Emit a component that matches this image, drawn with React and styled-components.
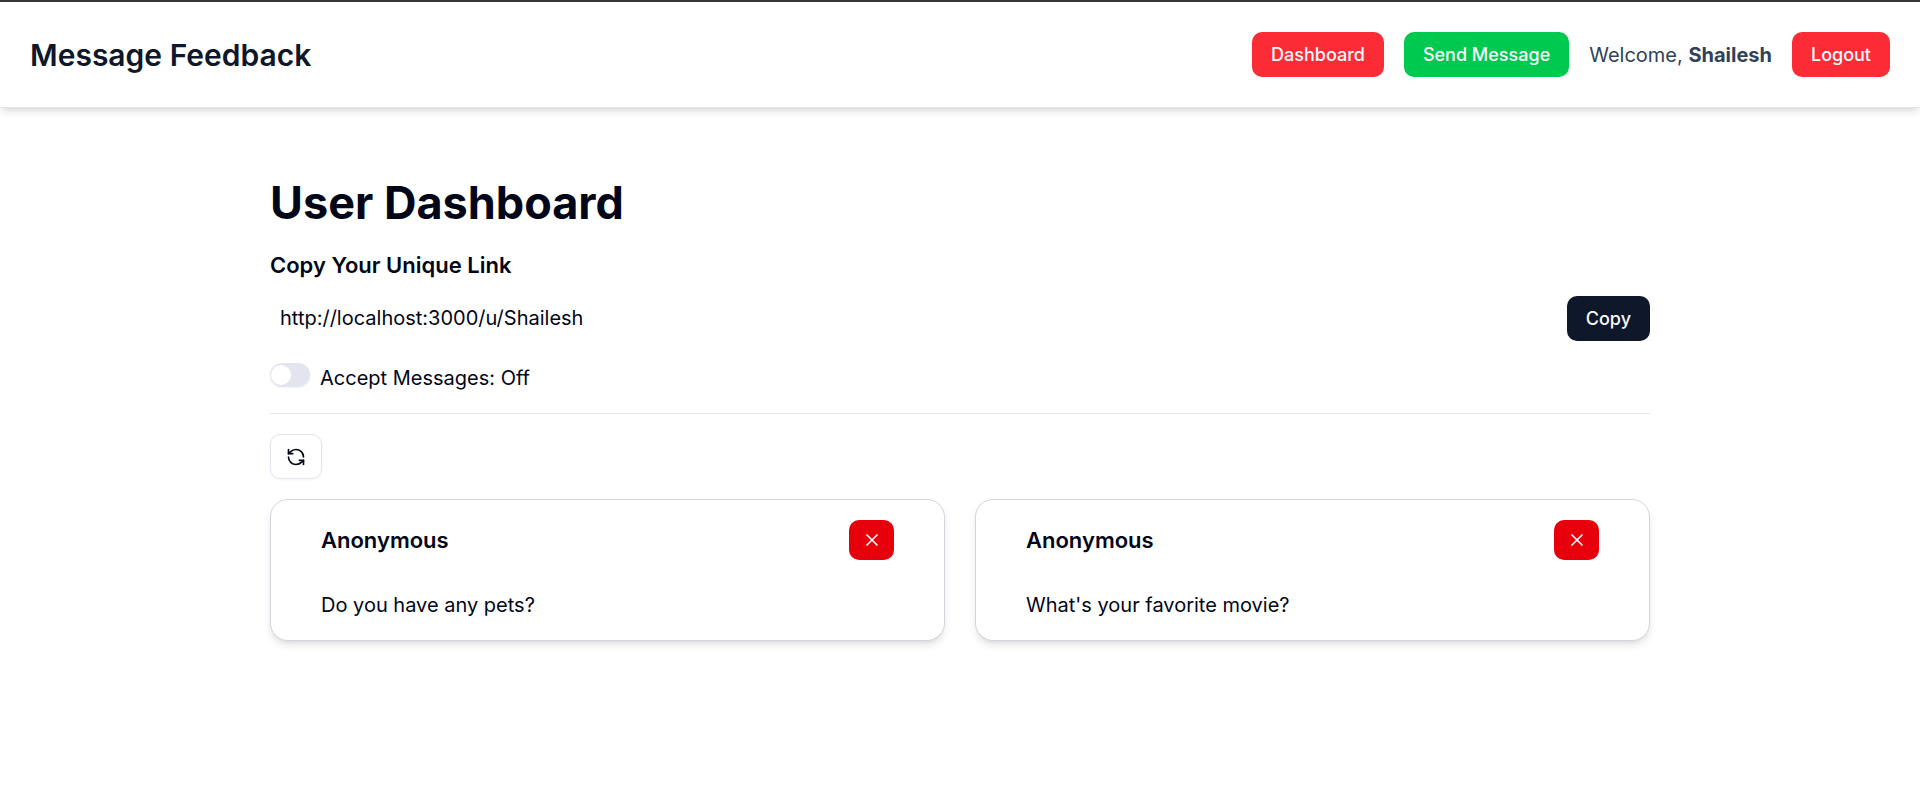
import React, { useState } from 'react';
import styled, { createGlobalStyle } from 'styled-components';
import { RefreshCcw, X } from 'lucide-react';

const initialMessages = [
    { id: 1, sender: 'Anonymous', content: 'Do you have any pets?' },
    { id: 2, sender: 'Anonymous', content: "What's your favorite movie?" },
];

function Navbar({ username }) {
    return (
        <Nav>
            <Brand href="#">Message Feedback</Brand>
            <NavActions>
                <Button $color="#fb2c36">Dashboard</Button>
                <Button $color="#00c950">Send Message</Button>
                <Welcome>Welcome, <strong>{username}</strong></Welcome>
                <Button $color="#fb2c36">Logout</Button>
            </NavActions>
        </Nav>
    );
}

function MessageCard({ message, onDelete }) {
    return (
        <Card>
            <CardHeader>
                <CardTitle>{message.sender}</CardTitle>
                <DeleteButton aria-label="Delete message" onClick={() => onDelete(message.id)}>
                    <X size={20} />
                </DeleteButton>
            </CardHeader>
            <CardText>{message.content}</CardText>
        </Card>
    );
}

function App() {
    const username = 'Shailesh';
    const profileUrl = `http://localhost:3000/u/${username}`;
    const [messages, setMessages] = useState(initialMessages);
    const [accepting, setAccepting] = useState(false);

    const handleDelete = (id) => {
        setMessages(messages.filter((message) => message.id !== id));
    };

    return (
        <>
            <GlobalStyle />
            <Navbar username={username} />
            <Main>
                <PageTitle>User Dashboard</PageTitle>
                <LinkLabel htmlFor="profile-url">Copy Your Unique Link</LinkLabel>
                <LinkRow>
                    <LinkInput id="profile-url" type="text" value={profileUrl} readOnly />
                    <Button $color="#0f172b" onClick={() => navigator.clipboard.writeText(profileUrl)}>Copy</Button>
                </LinkRow>
                <SwitchRow>
                    <Switch
                        id="accept"
                        type="checkbox"
                        role="switch"
                        checked={accepting}
                        onChange={() => setAccepting(!accepting)}
                    />
                    <label htmlFor="accept">Accept Messages: {accepting ? 'On' : 'Off'}</label>
                </SwitchRow>
                <Separator />
                <RefreshButton aria-label="Refresh messages" onClick={() => setMessages(initialMessages)}>
                    <RefreshCcw size={20} />
                </RefreshButton>
                <CardGrid>
                    {messages.map((message) => (
                        <MessageCard key={message.id} message={message} onDelete={handleDelete} />
                    ))}
                </CardGrid>
            </Main>
        </>
    );
}

const GlobalStyle = createGlobalStyle`
    *, *::before, *::after {
        box-sizing: border-box;
    }
    body {
        margin: 0;
        background: #fff;
        color: #020618;
        font-family: Inter, "Liberation Sans", sans-serif;
        font-size: 20px;
        line-height: 30px;
    }
    button, input {
        font-family: inherit;
    }
`;

const Nav = styled.nav`
    display: flex;
    align-items: center;
    justify-content: space-between;
    padding: 30px;
    background: #fff;
    border-top: 2px solid #3b3738;
    border-bottom: 1px solid #e2e5ee;
    box-shadow: 0 5px 8px -1px rgba(0, 0, 0, 0.1), 0 3px 5px -3px rgba(0, 0, 0, 0.1);
`;

const Brand = styled.a`
    color: #0f172b;
    font-size: 30px;
    font-weight: 600;
    line-height: 40px;
    text-decoration: none;
`;

const NavActions = styled.div`
    display: flex;
    align-items: center;
    gap: 20px;
`;

const Welcome = styled.span`
    color: #314158;

    strong {
        font-weight: 700;
    }
`;

const Button = styled.button`
    height: 45px;
    padding: 0 19px;
    border: none;
    border-radius: 10px;
    background: ${(props) => props.$color};
    color: #f8fafc;
    font-size: 18px;
    font-weight: 500;
    white-space: nowrap;
    cursor: pointer;
`;

const Main = styled.main`
    max-width: 1440px;
    margin: 40px auto;
    padding: 30px;
`;

const PageTitle = styled.h1`
    margin: 0 0 20px;
    font-size: 45px;
    font-weight: 700;
    line-height: 50px;
`;

const LinkLabel = styled.label`
    display: block;
    margin-bottom: 10px;
    font-size: 22px;
    font-weight: 600;
    line-height: 35px;
`;

const LinkRow = styled.div`
    display: flex;
    align-items: center;
    margin-bottom: 20px;
`;

const LinkInput = styled.input`
    flex: 1;
    min-width: 0;
    height: 50px;
    padding: 10px;
    border: none;
    background: transparent;
    color: inherit;
    font-size: 20px;
`;

const SwitchRow = styled.div`
    display: flex;
    align-items: flex-start;
    gap: 10px;
    margin-bottom: 20px;
`;

const Switch = styled.input`
    appearance: none;
    width: 40px;
    height: 24px;
    margin: 0;
    padding: 2px 1px;
    border-radius: 12px;
    background: ${(props) => (props.checked ? '#0f172b' : '#e2e5ee')};
    box-shadow: 0 1px 3px rgba(0, 0, 0, 0.05);
    cursor: pointer;

    &::before {
        content: '';
        display: block;
        width: 20px;
        height: 20px;
        margin-left: ${(props) => (props.checked ? '18px' : '0')};
        border-radius: 50%;
        background: #fff;
    }
`;

const Separator = styled.hr`
    height: 1px;
    margin: 0 0 20px;
    border: none;
    background: #e2e5ee;
`;

const IconButton = styled.button`
    display: flex;
    align-items: center;
    justify-content: center;
    border-radius: 10px;
    cursor: pointer;
`;

const RefreshButton = styled(IconButton)`
    height: 45px;
    padding: 0 15px;
    border: 1px solid #e2e5ee;
    background: #fff;
    color: #020618;
    box-shadow: 0 1px 3px rgba(0, 0, 0, 0.05);
`;

const DeleteButton = styled(IconButton)`
    width: 45px;
    height: 40px;
    padding: 0;
    border: none;
    background: #e7000b;
    color: #fff;
`;

const CardGrid = styled.div`
    display: grid;
    grid-template-columns: repeat(2, 1fr);
    gap: 30px;
    margin-top: 20px;

    @media (max-width: 960px) {
        grid-template-columns: 1fr;
    }
`;

const Card = styled.article`
    padding: 20px 50px;
    border: 1px solid #d1d5dc;
    border-radius: 18px;
    background: #fff;
    box-shadow: 0 5px 8px -1px rgba(0, 0, 0, 0.1), 0 3px 5px -3px rgba(0, 0, 0, 0.1);
`;

const CardHeader = styled.div`
    display: flex;
    align-items: center;
    justify-content: space-between;
    margin-bottom: 30px;
`;

const CardTitle = styled.h3`
    margin: 0;
    font-size: 22px;
    font-weight: 600;
    line-height: 35px;
`;

const CardText = styled.p`
    margin: 0;
`;

export default App;
